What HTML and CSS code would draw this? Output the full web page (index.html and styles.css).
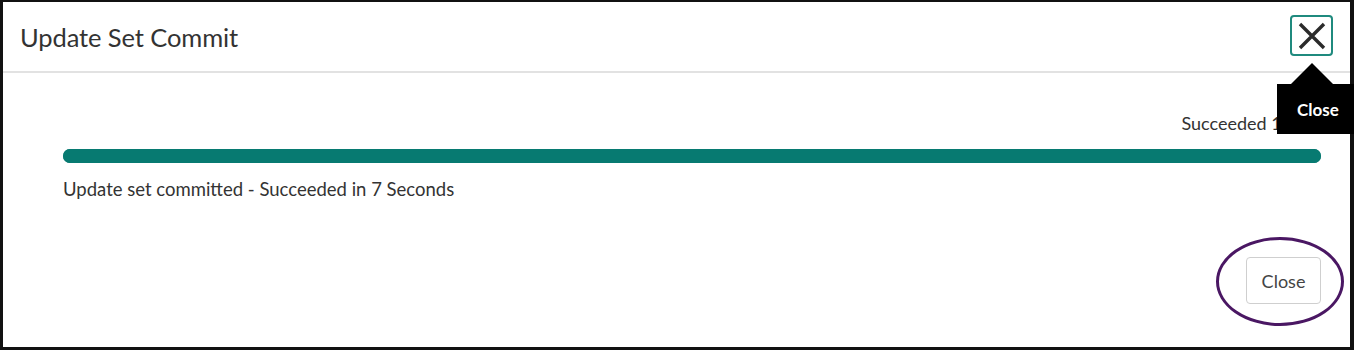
FILE: index.html
```html
<!DOCTYPE html>
<html>
<head>
<meta charset="utf-8">
<link rel="stylesheet" href="styles.css">
</head>
<body>
<div class="frame">
  <div class="modal-header">
    <h1 class="modal-title">Update Set Commit</h1>
    <button class="icon-close" aria-label="Close">
      <svg width="30" height="30" viewBox="0 0 30 30"><path d="M3 3 L27 27 M27 3 L3 27" stroke="#2b2b2b" stroke-width="3.4" stroke-linecap="butt" fill="none"/></svg>
    </button>
  </div>
  <div class="modal-body">
    <div class="status-row"><span class="status">Succeeded 100%</span></div>
    <div class="progress"><div class="progress-fill"></div></div>
    <div class="message">Update set committed - Succeeded in 7 Seconds</div>
  </div>
  <div class="modal-footer">
    <button class="btn-close">Close</button>
  </div>
  <div class="tooltip">
    <div class="tooltip-arrow"></div>
    <div class="tooltip-box">Close</div>
  </div>
  <div class="annotation"></div>
</div>
</body>
</html>
```

FILE: styles.css
```css
* { box-sizing: border-box; }
html, body { margin: 0; padding: 0; background: #fff; }
body { width: 1354px; height: 350px; overflow: hidden; font-family: Lato, "Liberation Sans", sans-serif; color: #2e2e2e; }
.frame {
  position: relative;
  width: 1354px;
  height: 350px;
  border-style: solid;
  border-color: #111;
  border-width: 2px 4px 3px 3px;
  background: #fff;
  display: flex;
  flex-direction: column;
}
.modal-header {
  height: 71px;
  border-bottom: 2px solid #e2e2e2;
  display: flex;
  align-items: center;
  justify-content: space-between;
  padding: 1px 17px 0 17px;
}
.modal-title {
  margin: 0;
  font-size: 25.5px;
  font-weight: 400;
  color: #333;
  letter-spacing: -0.1px;
}
.icon-close {
  width: 43px;
  height: 41px;
  border: 2px solid #1f8a7e;
  border-radius: 4px;
  background: #fff;
  padding: 0;
  display: flex;
  align-items: center;
  justify-content: center;
  margin-top: -3px;
}
.icon-close svg { display: block; }
.modal-body {
  padding: 39px 29px 0 60px;
}
.status-row {
  display: flex;
  justify-content: flex-end;
  height: 24px;
  padding-right: 4px;
}
.status { font-size: 18px; color: #333; white-space: nowrap; }
.progress {
  margin-top: 13px;
  height: 14px;
  border-radius: 7px;
  background: #0a7a72;
}
.progress-fill { height: 100%; width: 100%; border-radius: 7px; background: #077a71; }
.message {
  margin-top: 15px;
  font-size: 18.5px;
  color: #333;
}
.modal-footer {
  margin-top: auto;
  display: flex;
  justify-content: flex-end;
  padding: 0 29px 43px 0;
}
.btn-close {
  width: 75px;
  height: 47px;
  background: #fff;
  border: 1px solid #cfcfcf;
  border-radius: 4px;
  font-family: Lato, "Liberation Sans", sans-serif;
  font-size: 18px;
  color: #444;
  padding: 0;
}
.tooltip {
  position: absolute;
  left: 1274px;
  top: 61px;
  width: 80px;
  display: flex;
  flex-direction: column;
  align-items: flex-start;
}
.tooltip-arrow {
  width: 0;
  height: 0;
  margin-left: 14px;
  border-left: 21px solid transparent;
  border-right: 21px solid transparent;
  border-bottom: 21px solid #000;
}
.tooltip-box {
  width: 80px;
  height: 50px;
  background: #000;
  color: #fff;
  font-weight: 700;
  font-size: 17px;
  display: flex;
  align-items: center;
  padding-left: 20px;
}
.annotation {
  position: absolute;
  left: 1213px;
  top: 235px;
  width: 128px;
  height: 89px;
  border: 3px solid #4a1763;
  border-radius: 50%;
}
```
